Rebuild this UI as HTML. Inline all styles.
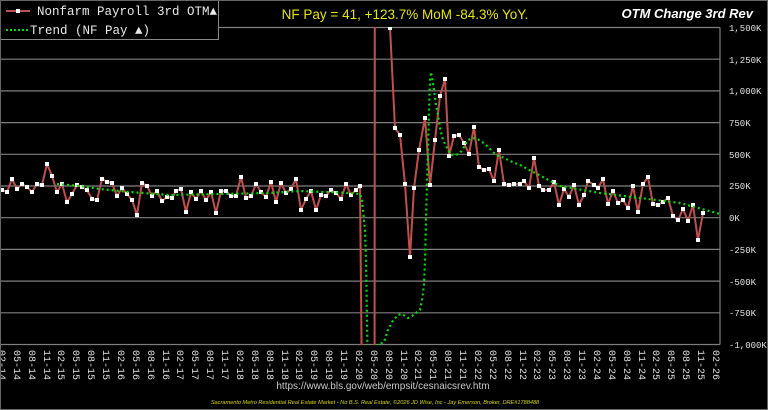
<!DOCTYPE html>
<html><head><meta charset="utf-8"><style>
html,body{margin:0;padding:0;background:#000;width:768px;height:410px;overflow:hidden;}
svg{display:block}
</style></head><body>
<svg width="768" height="410" viewBox="0 0 768 410" xmlns="http://www.w3.org/2000/svg">
<rect x="0" y="0" width="768" height="410" fill="#000"/>
<g stroke="#7f7f7f" stroke-width="1.2">
<line x1="0" x2="720" y1="27.5" y2="27.5"/>
<line x1="0" x2="720" y1="59.2" y2="59.2"/>
<line x1="0" x2="720" y1="90.9" y2="90.9"/>
<line x1="0" x2="720" y1="122.6" y2="122.6"/>
<line x1="0" x2="720" y1="154.3" y2="154.3"/>
<line x1="0" x2="720" y1="186" y2="186"/>
<line x1="0" x2="720" y1="217.7" y2="217.7"/>
<line x1="0" x2="720" y1="249.4" y2="249.4"/>
<line x1="0" x2="720" y1="281.1" y2="281.1"/>
<line x1="0" x2="720" y1="312.8" y2="312.8"/>
<line x1="0" x2="720" y1="344.5" y2="344.5"/>
<line x1="720" x2="720" y1="27.5" y2="344.5"/>
</g>
<defs><clipPath id="c"><rect x="0" y="27" width="720" height="318"/></clipPath></defs>
<g clip-path="url(#c)">
<polyline fill="none" stroke="#c0504d" stroke-width="2" stroke-linejoin="round" points="2,190 7,192 12,179 17,189 22,184 27,187 32,192 37,184 42,185 47,164 52,176 57,192 62,184 67,202 72,194 77,185 82,187 87,190 92,199 97,200 102,179 107,182 112,183 117,196 122,188 127,194 132,200 137,215 142,183 147,186 152,196 157,191 162,201 167,197 172,198 176,191 181,189 186,212 191,192 196,199 201,191 206,200 211,192 216,213 221,191 226,191 231,196 236,196 241,177 246,198 251,196 256,184 261,192 266,197 271,182 276,202 281,183 286,193 291,189 296,179 301,210 306,199 311,191 316,210 321,195 326,196 331,190 336,193 341,199 346,184 351,195 356,190 360,186 364,600 373.5,2000 375,-300 383,-800 390,27 395,128 400,135 405,184 410,257 414,188 419,150 425,118 430,185 435,140 440,96 445,79 449,156 454,136 459,135 464,143 469,154 474,127 479,167 484,170 489,169 494,181 499,150 504,184 509,185 514,184 520,184 524,181 529,188 534,158 539,186 543,190 549,190 554,182 559,205 564,189 569,197 574,185 579,205 584,195 588,181 594,185 598,188 603,179 608,204 613,191 618,203 623,200 628,208 633,186 638,212 643,184 648,177 653,204 658,205 663,202 668,198 673,216 678,220 683,209 688,221 693,205 698,240 703,213"/>
<g fill="#fff">
<path d="M2,190m-2,-2h4v4h-4z M7,192m-2,-2h4v4h-4z M12,179m-2,-2h4v4h-4z M17,189m-2,-2h4v4h-4z M22,184m-2,-2h4v4h-4z M27,187m-2,-2h4v4h-4z M32,192m-2,-2h4v4h-4z M37,184m-2,-2h4v4h-4z M42,185m-2,-2h4v4h-4z M47,164m-2,-2h4v4h-4z M52,176m-2,-2h4v4h-4z M57,192m-2,-2h4v4h-4z M62,184m-2,-2h4v4h-4z M67,202m-2,-2h4v4h-4z M72,194m-2,-2h4v4h-4z M77,185m-2,-2h4v4h-4z M82,187m-2,-2h4v4h-4z M87,190m-2,-2h4v4h-4z M92,199m-2,-2h4v4h-4z M97,200m-2,-2h4v4h-4z M102,179m-2,-2h4v4h-4z M107,182m-2,-2h4v4h-4z M112,183m-2,-2h4v4h-4z M117,196m-2,-2h4v4h-4z M122,188m-2,-2h4v4h-4z M127,194m-2,-2h4v4h-4z M132,200m-2,-2h4v4h-4z M137,215m-2,-2h4v4h-4z M142,183m-2,-2h4v4h-4z M147,186m-2,-2h4v4h-4z M152,196m-2,-2h4v4h-4z M157,191m-2,-2h4v4h-4z M162,201m-2,-2h4v4h-4z M167,197m-2,-2h4v4h-4z M172,198m-2,-2h4v4h-4z M176,191m-2,-2h4v4h-4z M181,189m-2,-2h4v4h-4z M186,212m-2,-2h4v4h-4z M191,192m-2,-2h4v4h-4z M196,199m-2,-2h4v4h-4z M201,191m-2,-2h4v4h-4z M206,200m-2,-2h4v4h-4z M211,192m-2,-2h4v4h-4z M216,213m-2,-2h4v4h-4z M221,191m-2,-2h4v4h-4z M226,191m-2,-2h4v4h-4z M231,196m-2,-2h4v4h-4z M236,196m-2,-2h4v4h-4z M241,177m-2,-2h4v4h-4z M246,198m-2,-2h4v4h-4z M251,196m-2,-2h4v4h-4z M256,184m-2,-2h4v4h-4z M261,192m-2,-2h4v4h-4z M266,197m-2,-2h4v4h-4z M271,182m-2,-2h4v4h-4z M276,202m-2,-2h4v4h-4z M281,183m-2,-2h4v4h-4z M286,193m-2,-2h4v4h-4z M291,189m-2,-2h4v4h-4z M296,179m-2,-2h4v4h-4z M301,210m-2,-2h4v4h-4z M306,199m-2,-2h4v4h-4z M311,191m-2,-2h4v4h-4z M316,210m-2,-2h4v4h-4z M321,195m-2,-2h4v4h-4z M326,196m-2,-2h4v4h-4z M331,190m-2,-2h4v4h-4z M336,193m-2,-2h4v4h-4z M341,199m-2,-2h4v4h-4z M346,184m-2,-2h4v4h-4z M351,195m-2,-2h4v4h-4z M356,190m-2,-2h4v4h-4z M360,186m-2,-2h4v4h-4z M390,28m-2,-2h4v4h-4z M395,128m-2,-2h4v4h-4z M400,135m-2,-2h4v4h-4z M405,184m-2,-2h4v4h-4z M410,257m-2,-2h4v4h-4z M414,188m-2,-2h4v4h-4z M419,150m-2,-2h4v4h-4z M425,118m-2,-2h4v4h-4z M430,185m-2,-2h4v4h-4z M435,140m-2,-2h4v4h-4z M440,96m-2,-2h4v4h-4z M445,79m-2,-2h4v4h-4z M449,156m-2,-2h4v4h-4z M454,136m-2,-2h4v4h-4z M459,135m-2,-2h4v4h-4z M464,143m-2,-2h4v4h-4z M469,154m-2,-2h4v4h-4z M474,127m-2,-2h4v4h-4z M479,167m-2,-2h4v4h-4z M484,170m-2,-2h4v4h-4z M489,169m-2,-2h4v4h-4z M494,181m-2,-2h4v4h-4z M499,150m-2,-2h4v4h-4z M504,184m-2,-2h4v4h-4z M509,185m-2,-2h4v4h-4z M514,184m-2,-2h4v4h-4z M520,184m-2,-2h4v4h-4z M524,181m-2,-2h4v4h-4z M529,188m-2,-2h4v4h-4z M534,158m-2,-2h4v4h-4z M539,186m-2,-2h4v4h-4z M543,190m-2,-2h4v4h-4z M549,190m-2,-2h4v4h-4z M554,182m-2,-2h4v4h-4z M559,205m-2,-2h4v4h-4z M564,189m-2,-2h4v4h-4z M569,197m-2,-2h4v4h-4z M574,185m-2,-2h4v4h-4z M579,205m-2,-2h4v4h-4z M584,195m-2,-2h4v4h-4z M588,181m-2,-2h4v4h-4z M594,185m-2,-2h4v4h-4z M598,188m-2,-2h4v4h-4z M603,179m-2,-2h4v4h-4z M608,204m-2,-2h4v4h-4z M613,191m-2,-2h4v4h-4z M618,203m-2,-2h4v4h-4z M623,200m-2,-2h4v4h-4z M628,208m-2,-2h4v4h-4z M633,186m-2,-2h4v4h-4z M638,212m-2,-2h4v4h-4z M643,184m-2,-2h4v4h-4z M648,177m-2,-2h4v4h-4z M653,204m-2,-2h4v4h-4z M658,205m-2,-2h4v4h-4z M663,202m-2,-2h4v4h-4z M668,198m-2,-2h4v4h-4z M673,216m-2,-2h4v4h-4z M678,220m-2,-2h4v4h-4z M683,209m-2,-2h4v4h-4z M688,221m-2,-2h4v4h-4z M693,205m-2,-2h4v4h-4z M698,240m-2,-2h4v4h-4z M703,213m-2,-2h4v4h-4z"/>
</g>
<polyline fill="none" stroke="#00e000" stroke-width="2.2" stroke-dasharray="2 3" points="57,184 80,186 100,189 130,192 170,195 220,194 270,193 300,191 350,193 360,194 362,200 365,230 366,260 367.5,350 384,342 388,330 392,322 398,315 402,314 408,318 412,316 420,310 422,300 424,285 425,260 426,220 427,180 428,150 429,110 430,80 431,72 432,77 434,90 436,105 438,115 440,128 443,140 447,148 451,155 456,155 460,153 464,147 468,140 473,138 477,139 481,141 486,145 491,150 496,155 502,157 510,161 520,165 560,186 600,193 640,198 680,203 720,214"/>
</g>
<g font-family="'Liberation Mono','DejaVu Sans Mono',monospace" font-size="9" fill="#e0e0e0">
<text x="729" y="31">1,500K</text>
<text x="729" y="63">1,250K</text>
<text x="729" y="94">1,000K</text>
<text x="729" y="126">750K</text>
<text x="729" y="158">500K</text>
<text x="729" y="189">250K</text>
<text x="729" y="221">0K</text>
<text x="729" y="253">-250K</text>
<text x="729" y="285">-500K</text>
<text x="729" y="316">-750K</text>
<text x="729" y="348">-1,000K</text>
</g>
<rect x="0.5" y="0.5" width="218" height="39" fill="#000" stroke="#8a8a8a"/>
<line x1="6" x2="30" y1="11" y2="11" stroke="#c0504d" stroke-width="2"/>
<rect x="16" y="9" width="4" height="4" fill="#fff"/>
<text x="37" y="15" font-family="'Liberation Mono','DejaVu Sans Mono',monospace" font-size="12.5" fill="#e8e8e8">Nonfarm Payroll 3rd OTM▲</text>
<line x1="6" x2="30" y1="30" y2="30" stroke="#00e000" stroke-width="2" stroke-dasharray="2 2"/>
<text x="30" y="34" font-family="'Liberation Mono','DejaVu Sans Mono',monospace" font-size="12.5" fill="#e8e8e8">Trend (NF Pay ▲)</text>
<text x="405" y="19" text-anchor="middle" font-family="'Liberation Sans',sans-serif" font-size="13.5" fill="#e6e600">NF Pay = 41, +123.7% MoM -84.3% YoY.</text>
<text x="753" y="18" text-anchor="end" font-family="'Liberation Sans',sans-serif" font-size="13" font-style="italic" font-weight="bold" fill="#fff">OTM Change 3rd Rev</text>
<text x="383" y="389" text-anchor="middle" font-family="'Liberation Sans',sans-serif" font-size="10" fill="#c8c8c8">https://www.bls.gov/web/empsit/cesnaicsrev.htm</text>
<text x="375" y="404" text-anchor="middle" font-family="'Liberation Sans',sans-serif" font-size="5.6" font-style="italic" fill="#d4d400">Sacramento Metro Residential Real Estate Market - No B.S. Real Estate, ©2026 JD Wise, Inc - Jay Emerson, Broker, DRE#1788488</text>
<g font-family="'Liberation Mono','DejaVu Sans Mono',monospace" font-size="10" fill="#e0e0e0">
<text transform="translate(-1,350) rotate(90)">02-14</text>
<text transform="translate(14,350) rotate(90)">05-14</text>
<text transform="translate(29,350) rotate(90)">08-14</text>
<text transform="translate(44,350) rotate(90)">11-14</text>
<text transform="translate(58,350) rotate(90)">02-15</text>
<text transform="translate(73,350) rotate(90)">05-15</text>
<text transform="translate(88,350) rotate(90)">08-15</text>
<text transform="translate(103,350) rotate(90)">11-15</text>
<text transform="translate(118,350) rotate(90)">02-16</text>
<text transform="translate(133,350) rotate(90)">05-16</text>
<text transform="translate(148,350) rotate(90)">08-16</text>
<text transform="translate(163,350) rotate(90)">11-16</text>
<text transform="translate(177,350) rotate(90)">02-17</text>
<text transform="translate(192,350) rotate(90)">05-17</text>
<text transform="translate(207,350) rotate(90)">08-17</text>
<text transform="translate(222,350) rotate(90)">11-17</text>
<text transform="translate(237,350) rotate(90)">02-18</text>
<text transform="translate(252,350) rotate(90)">05-18</text>
<text transform="translate(267,350) rotate(90)">08-18</text>
<text transform="translate(282,350) rotate(90)">11-18</text>
<text transform="translate(296,350) rotate(90)">02-19</text>
<text transform="translate(311,350) rotate(90)">05-19</text>
<text transform="translate(326,350) rotate(90)">08-19</text>
<text transform="translate(341,350) rotate(90)">11-19</text>
<text transform="translate(356,350) rotate(90)">02-20</text>
<text transform="translate(371,350) rotate(90)">05-20</text>
<text transform="translate(386,350) rotate(90)">08-20</text>
<text transform="translate(401,350) rotate(90)">11-20</text>
<text transform="translate(415,350) rotate(90)">02-21</text>
<text transform="translate(430,350) rotate(90)">05-21</text>
<text transform="translate(445,350) rotate(90)">08-21</text>
<text transform="translate(460,350) rotate(90)">11-21</text>
<text transform="translate(475,350) rotate(90)">02-22</text>
<text transform="translate(490,350) rotate(90)">05-22</text>
<text transform="translate(505,350) rotate(90)">08-22</text>
<text transform="translate(520,350) rotate(90)">11-22</text>
<text transform="translate(534,350) rotate(90)">02-23</text>
<text transform="translate(549,350) rotate(90)">05-23</text>
<text transform="translate(564,350) rotate(90)">08-23</text>
<text transform="translate(579,350) rotate(90)">11-23</text>
<text transform="translate(594,350) rotate(90)">02-24</text>
<text transform="translate(609,350) rotate(90)">05-24</text>
<text transform="translate(624,350) rotate(90)">08-24</text>
<text transform="translate(639,350) rotate(90)">11-24</text>
<text transform="translate(653,350) rotate(90)">02-25</text>
<text transform="translate(668,350) rotate(90)">05-25</text>
<text transform="translate(683,350) rotate(90)">08-25</text>
<text transform="translate(698,350) rotate(90)">11-25</text>
<text transform="translate(713,350) rotate(90)">02-26</text>
</g>
<rect x="0.5" y="0.5" width="767" height="409" fill="none" stroke="#666"/>
</svg>
</body></html>
